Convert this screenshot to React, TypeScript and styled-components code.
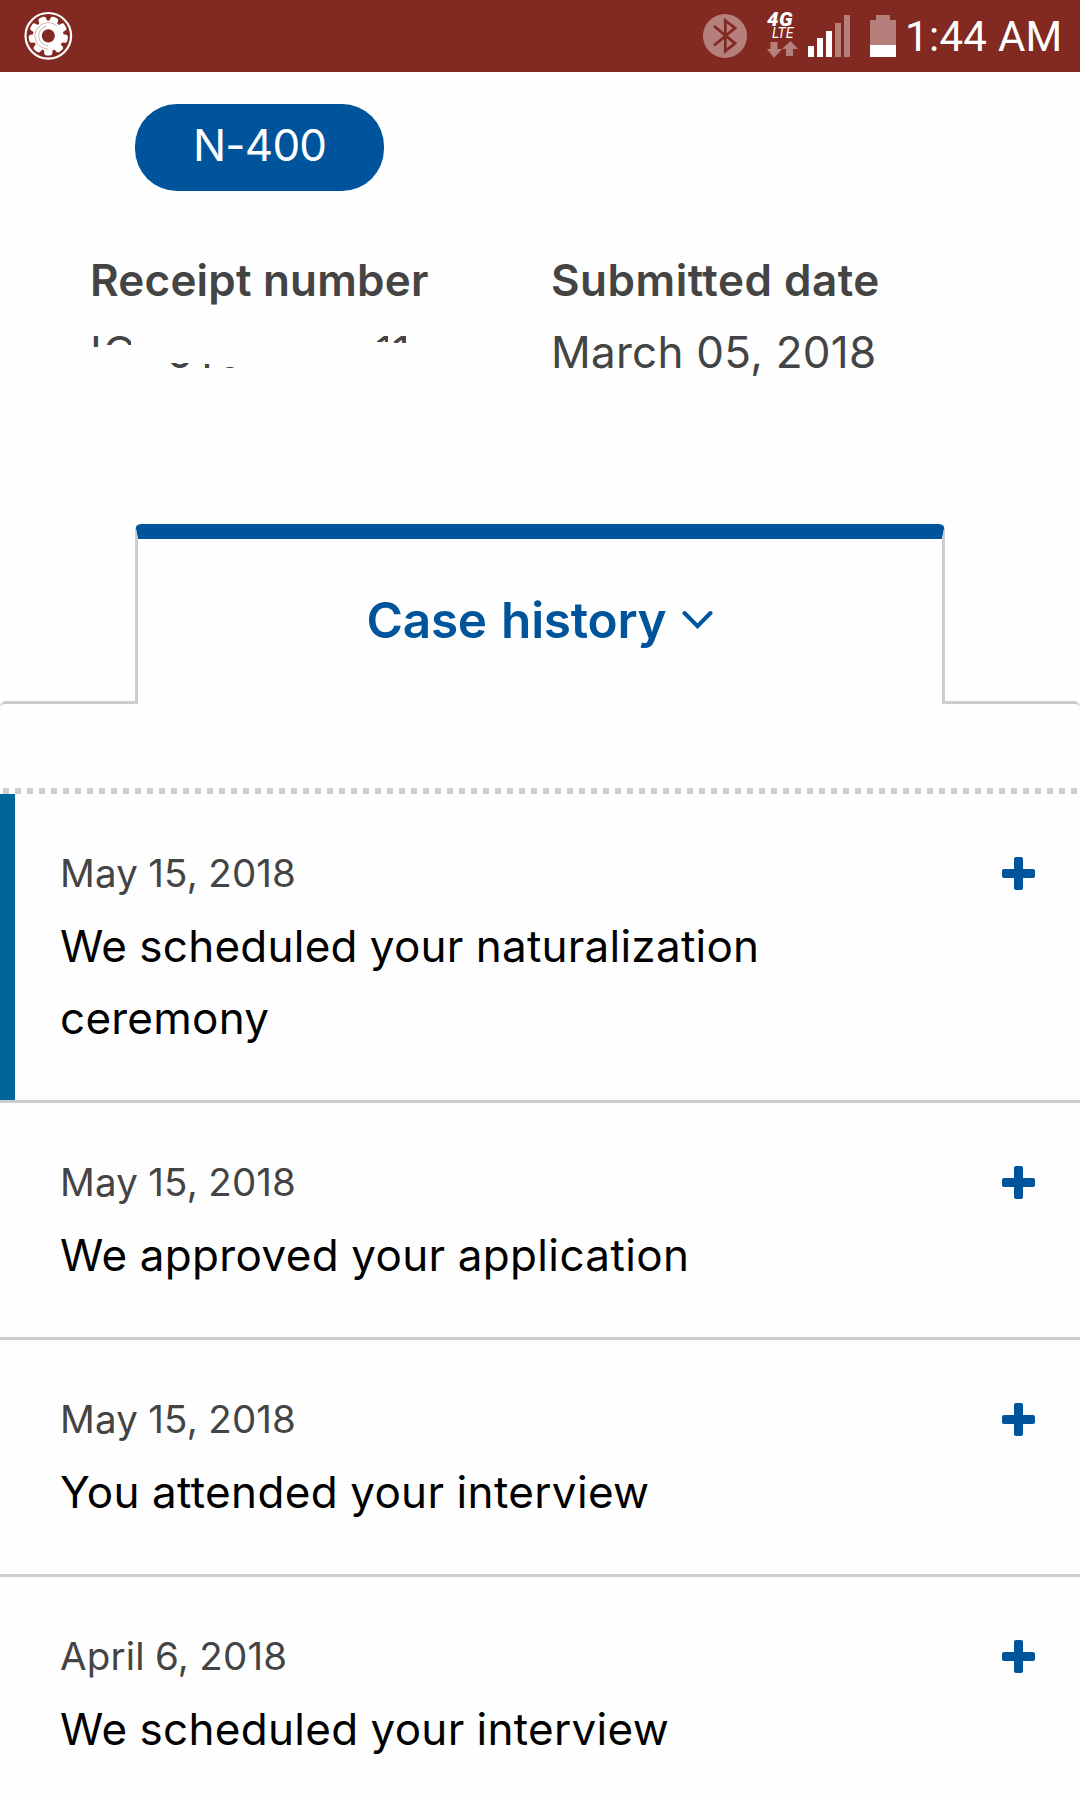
import React from "react";
import styled, { createGlobalStyle } from "styled-components";

const BLUE = "#00549b";
const GREY = "#cccccc";
const DIM = "#b57f7b";

const GlobalStyle = createGlobalStyle`
  * { box-sizing: border-box; }
  body {
    margin: 0;
    background: #fefefe;
    font-family: Inter, "Liberation Sans", sans-serif;
    overflow: hidden;
  }
`;

const Screen = styled.div`
  width: 1080px;
  height: 1798px;
  overflow: hidden;
  background: #fefefe;
  display: flex;
  flex-direction: column;
`;

const StatusBar = styled.header`
  height: 72px;
  flex: none;
  display: flex;
  align-items: flex-start;
  justify-content: space-between;
  padding-left: 24px;
  background: #822922;
  color: #fff;
  font-family: Roboto, sans-serif;
`;

const GearIcon = styled.svg`
  display: block;
  margin-top: 11px;
`;

const StatusIcons = styled.div`
  display: flex;
  align-items: flex-start;
`;

const StatusIcon = styled.svg<{ $top: number; $left?: number }>`
  display: block;
  margin-top: ${(p) => p.$top}px;
  margin-left: ${(p) => p.$left ?? 0}px;
`;

const Network = styled.div`
  width: 32px;
  margin-left: 19px;
  padding-top: 12px;
  display: flex;
  flex-direction: column;
  white-space: nowrap;
`;

const Generation = styled.span`
  font-size: 20.5px;
  font-weight: 900;
  font-style: italic;
  line-height: 15px;
  height: 15px;
  margin-left: 1px;
  letter-spacing: 0.4px;
`;

const Lte = styled.span`
  font-size: 14px;
  font-style: italic;
  line-height: 12px;
  height: 13px;
  margin-left: 6px;
  letter-spacing: 0.1px;
`;

const Clock = styled.time`
  width: 184px;
  padding-left: 9px;
  font-size: 42px;
  line-height: 74px;
  letter-spacing: 0.3px;
  white-space: nowrap;
`;

const Pill = styled.div`
  width: 249px;
  height: 87px;
  flex: none;
  margin: 32px 0 0 135px;
  padding: 0 0 5px 58px;
  border-radius: 42px;
  background: ${BLUE};
  color: #fff;
  font-size: 44px;
  line-height: 82px;
  letter-spacing: -0.8px;
`;

const Details = styled.dl`
  display: grid;
  grid-template-columns: 461px 1fr;
  margin: 53px 0 0 90px;
  color: #444;
  font-size: 44px;
  line-height: 72px;
`;

const Detail = styled.div`
  white-space: nowrap;
`;

const Label = styled.dt<{ $tracking: number }>`
  font-weight: 600;
  letter-spacing: ${(p) => p.$tracking}px;
`;

const Value = styled.dd`
  margin: 0;
  letter-spacing: 0.25px;
`;

const Redacted = styled.dd`
  margin: 20px 0 0;
  height: 32px;
  display: flex;
  flex-direction: column;
  justify-content: space-between;
  line-height: 32px;
`;

const Strip = styled.div<{ $bottom?: boolean }>`
  display: flex;
  align-items: ${(p) => (p.$bottom ? "flex-end" : "flex-start")};
`;

const Sliver = styled.span<{ $w: number; $h: number; $gap: number; $bottom?: boolean }>`
  display: flex;
  align-items: ${(p) => (p.$bottom ? "flex-end" : "flex-start")};
  flex: none;
  width: ${(p) => p.$w}px;
  height: ${(p) => p.$h}px;
  margin-left: ${(p) => p.$gap}px;
  overflow: hidden;
`;

const Tab = styled.button`
  width: 810px;
  height: 180px;
  flex: none;
  margin: 136px 0 0 135px;
  padding: 51px 0 0;
  display: flex;
  align-items: flex-start;
  justify-content: center;
  gap: 16px;
  background: #fefefe;
  border: 3px solid ${GREY};
  border-top: 15px solid ${BLUE};
  border-bottom: 0;
  border-radius: 6px 6px 0 0;
  color: ${BLUE};
  font: 600 49.5px/60px Inter, "Liberation Sans", sans-serif;
  letter-spacing: -0.25px;
  word-spacing: 2px;
  z-index: 1;
`;

const Chevron = styled.svg`
  display: block;
  margin-top: 20px;
`;

const Panel = styled.section`
  margin-top: -3px;
  padding-top: 84px;
  border-top: 3px solid ${GREY};
  border-radius: 6px 6px 0 0;
`;

const Dots = styled.div`
  height: 6px;
  background: repeating-linear-gradient(
    90deg,
    transparent 0 3px,
    ${GREY} 3px 9px,
    transparent 9px 12px
  );
`;

const History = styled.ul`
  list-style: none;
  margin: 0;
  padding: 0;
`;

const Entry = styled.li`
  border-bottom: 3px solid ${GREY};
`;

const EntryBody = styled.div<{ $active?: boolean }>`
  display: flex;
  justify-content: space-between;
  align-items: flex-start;
  padding: 48px 45px 46px ${(p) => (p.$active ? 45 : 60)}px;
  border-left: ${(p) => (p.$active ? "15px solid #006699" : "0")};
`;

const EntryText = styled.div`
  width: 760px;
`;

const EntryDate = styled.div`
  color: #444;
  font-size: 38.5px;
  line-height: 62px;
  letter-spacing: 0.15px;
  word-spacing: -0.6px;
`;

const EntryTitle = styled.div<{ $tracking: number }>`
  margin-top: 6px;
  color: #000;
  font-size: 44px;
  line-height: 72px;
  letter-spacing: ${(p) => p.$tracking}px;
  word-spacing: -0.6px;
`;

const Plus = styled.svg`
  display: block;
  margin-top: 15px;
`;

const entries = [
  {
    date: "May 15, 2018",
    title: "We scheduled your naturalization ceremony",
    tracking: 0.25,
    active: true,
  },
  { date: "May 15, 2018", title: "We approved your application", tracking: 0.37 },
  { date: "May 15, 2018", title: "You attended your interview", tracking: 0.35 },
  { date: "April 6, 2018", title: "We scheduled your interview", tracking: 0.3 },
];

const teeth = Array.from({ length: 9 }, (_, i) => 20 + i * 40);

function Gear() {
  return (
    <GearIcon width="49" height="49" viewBox="0 0 49 49">
      <circle cx="24.3" cy="24.8" r="22.8" fill="none" stroke="#fff" strokeWidth="2.2" />
      <g fill="#fff">
        <circle cx="24.3" cy="24.8" r="15.2" />
        {teeth.map((a) => (
          <rect
            key={a}
            x="20.2"
            y="5.2"
            width="8.2"
            height="9"
            rx="2.6"
            transform={`rotate(${a} 24.3 24.8)`}
          />
        ))}
      </g>
      <circle cx="24.3" cy="24.8" r="6.6" fill="#822922" />
      <path
        d="M24 34.6a9.8 9.8 0 0 1-1.5-19.4M24 38a13.2 13.2 0 1 1 8.6-23.4"
        fill="none"
        stroke="#c99f9c"
        strokeWidth="0.8"
      />
    </GearIcon>
  );
}

export default function App() {
  return (
    <Screen>
      <GlobalStyle />
      <StatusBar>
        <Gear />
        <StatusIcons>
          <StatusIcon $top={14} width="44" height="44" viewBox="0 0 44 44">
            <circle cx="22" cy="22" r="22" fill={DIM} />
            <path
              d="M11 12 32 29.3 22.3 37V6.500L32 14 11 31.500"
              fill="none"
              stroke="#822922"
              strokeWidth="2.8"
            />
          </StatusIcon>
          <Network>
            <Generation>4G</Generation>
            <Lte>LTE</Lte>
            <StatusIcon $top={1} width="32" height="17" viewBox="0 0 32 17">
              <path
                d="M4.500 1h7v7H16l-8 9-7-9h3.500zM20 15V8h-4l8.500-8 7.500 8h-5v7z"
                fill={DIM}
              />
            </StatusIcon>
          </Network>
          <StatusIcon $top={15} $left={10} width="42" height="42" viewBox="0 0 42 42">
            <path d="M0 31h6v11H0zM9 23h6v19H9zM18 16h6v26h-6z" fill="#fff" />
            <path d="M27 8h6v34h-6zM36 0h6v42h-6z" fill={DIM} />
          </StatusIcon>
          <StatusIcon $top={15} $left={20} width="26" height="42" viewBox="0 0 26 42">
            <path d="M6 0h14v5h6v25H0V5h6z" fill={DIM} />
            <path d="M0 30h26v12H0z" fill="#fff" />
          </StatusIcon>
          <Clock>1:44 AM</Clock>
        </StatusIcons>
      </StatusBar>

      <Pill>N-400</Pill>

      <Details>
        <Detail>
          <Label $tracking={0.2}>Receipt number</Label>
          <Redacted>
            <Strip>
              <Sliver $w={10} $h={11} $gap={0}>I</Sliver>
              <Sliver $w={28} $h={9} $gap={3}>C</Sliver>
              <Sliver $w={13} $h={6} $gap={244}>1</Sliver>
              <Sliver $w={14} $h={7} $gap={4}>1</Sliver>
            </Strip>
            <Strip $bottom>
              <Sliver $w={26} $h={5} $gap={76} $bottom>0</Sliver>
              <Sliver $w={16} $h={4} $gap={3} $bottom>1</Sliver>
              <Sliver $w={22} $h={1} $gap={5} $bottom>0</Sliver>
            </Strip>
          </Redacted>
        </Detail>
        <Detail>
          <Label $tracking={0.5}>Submitted date</Label>
          <Value>March 05, 2018</Value>
        </Detail>
      </Details>

      <Tab>
        Case history
        <Chevron width="31" height="20" viewBox="0 0 31 20">
          <path
            d="M2.500 3 15.500 16.200 28.500 3"
            fill="none"
            stroke={BLUE}
            strokeWidth="4"
            strokeLinecap="round"
          />
        </Chevron>
      </Tab>

      <Panel>
        <Dots />
        <History>
          {entries.map((e, i) => (
            <Entry key={i}>
              <EntryBody $active={e.active}>
                <EntryText>
                  <EntryDate>{e.date}</EntryDate>
                  <EntryTitle $tracking={e.tracking}>{e.title}</EntryTitle>
                </EntryText>
                <Plus width="33" height="33" viewBox="0 0 33 33">
                  <rect x="12" width="9" height="33" rx="2" fill={BLUE} />
                  <rect y="12" width="33" height="9" rx="2" fill={BLUE} />
                </Plus>
              </EntryBody>
            </Entry>
          ))}
        </History>
      </Panel>
    </Screen>
  );
}
